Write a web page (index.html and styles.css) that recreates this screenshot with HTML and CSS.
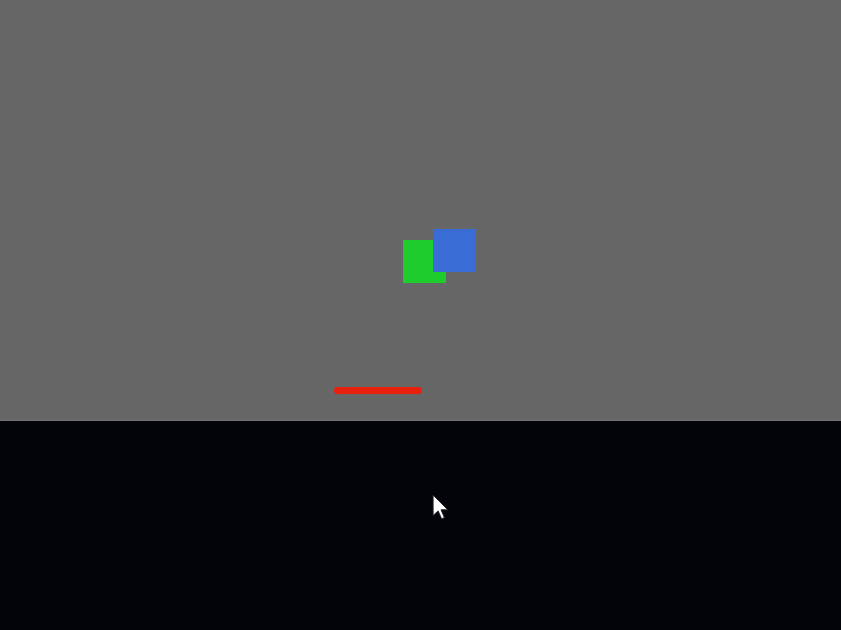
FILE: index.html
```html
<!DOCTYPE html>
<html>
<head>
<meta charset="utf-8">
<link rel="stylesheet" href="styles.css">
</head>
<body>
<div class="stage">
  <div class="scene">
    <div class="sq green"></div>
    <div class="sq blue"></div>
    <div class="bar"></div>
  </div>
  <div class="floor">
    <svg class="cursor" width="18" height="27" viewBox="0 0 16 24">
      <path d="M1 1 L1 19 L5.5 15 L8.5 22 L11 21 L8 14 L14 14 Z" fill="#ffffff" stroke="#222" stroke-width="0.8"/>
    </svg>
  </div>
</div>
</body>
</html>
```
FILE: styles.css
```css
html, body { margin: 0; padding: 0; }
body { width: 841px; height: 630px; overflow: hidden; background: #03030a; font-family: "Liberation Sans", sans-serif; }
.stage { display: flex; flex-direction: column; width: 841px; height: 630px; }
.scene { position: relative; height: 420px; background: #666666; border-bottom: 1px solid #727272; }
.floor { position: relative; flex: 1; background: #03030a; }
.sq { position: absolute; width: 43px; height: 43px; }
.green { left: 403px; top: 240px; background: #1fcc2e; }
.blue { left: 433px; top: 229px; background: #3a6cd6; }
.bar { position: absolute; left: 334px; top: 387px; width: 88px; height: 7px; border-radius: 3.5px; background: #e8210f; }
.cursor { position: absolute; left: 432px; top: 73px; }
```
